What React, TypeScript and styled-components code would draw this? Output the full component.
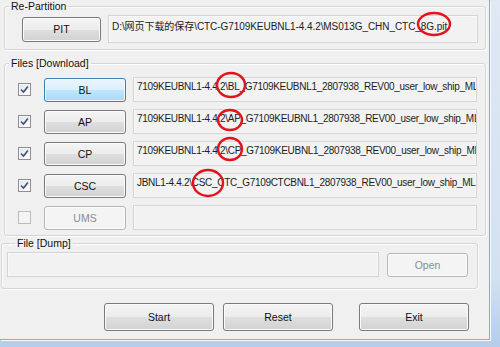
import React from "react";
import styled, { createGlobalStyle, css } from "styled-components";

const GlobalStyle = createGlobalStyle`
  html, body {
    margin: 0;
    padding: 0;
    background: #c9dbef;
  }
  body {
    font-family: "Liberation Sans", "Noto Sans CJK SC", sans-serif;
    font-size: 10.5px;
    color: #000;
  }
`;

const Frame = styled.div`
  position: relative;
  width: 500px;
  height: 347px;
  overflow: hidden;
  background: linear-gradient(180deg, #dfe8f3 0%, #d3e1f1 80%, #b4cdea 100%);
`;

const Client = styled.div`
  box-sizing: border-box;
  width: 490px;
  height: 340px;
  padding-left: 4px;
  background: #f0f0f0;
  border-right: 1px solid #9aa9ba;
  border-bottom: 1px solid #9aa9ba;
  box-shadow: 1px 1px 0 #f6f9fc;
  display: flex;
  flex-direction: column;
`;

const Group = styled.fieldset<{ $mt?: number; $ml?: number; $mr?: number }>`
  margin: ${(p) => p.$mt ?? 0}px ${(p) => p.$mr ?? 3}px 0 ${(p) => p.$ml ?? 0}px;
  padding: 0;
  border: 1px solid #d5d5d5;
  border-radius: 3px;
  box-shadow: inset 1px 1px 0 #fdfdfd, 1px 1px 0 #fdfdfd;
  min-width: 0;
`;

const Legend = styled.legend<{ $indent?: number }>`
  margin-left: ${(p) => p.$indent ?? 4}px;
  padding: 0 2px;
  line-height: 12px;
  font-size: 10.5px;
  color: #111;
`;

const Body = styled.div<{ $pad: string; $gap?: number }>`
  padding: ${(p) => p.$pad};
  display: flex;
  flex-direction: column;
  gap: ${(p) => p.$gap ?? 0}px;
`;

const Row = styled.div<{ $h: number; $gap?: number }>`
  height: ${(p) => p.$h}px;
  display: flex;
  align-items: center;
  gap: ${(p) => p.$gap ?? 7}px;
`;

const Field = styled.div<{ $h?: number; $pt?: number; $spacing?: number }>`
  flex: 1;
  min-width: 0;
  box-sizing: border-box;
  height: ${(p) => p.$h ?? 25}px;
  padding: ${(p) => p.$pt ?? 3}px 0 0 3px;
  border: 1px solid #d4d4d4;
  box-shadow: inset 0 0 0 1px #f8f8f8;
  background: #f2f2f2;
  font-size: 10px;
  line-height: 12px;
  letter-spacing: ${(p) => p.$spacing ?? 0}px;
  color: #1c1c1c;
  white-space: nowrap;
  overflow: hidden;
`;

const Button = styled.button<{ $w: number; $h?: number; $hot?: boolean; $ml?: number }>`
  flex: none;
  box-sizing: border-box;
  width: ${(p) => p.$w}px;
  height: ${(p) => p.$h ?? 24}px;
  margin: 0 0 0 ${(p) => p.$ml ?? 0}px;
  padding: 0;
  border: 1px solid #7a7a7a;
  border-radius: 3px;
  font-family: inherit;
  font-size: 10.5px;
  color: #111;
  background: linear-gradient(180deg, #f4f4f4 0%, #ececec 50%, #dfdfdf 51%, #d2d2d2 100%);
  box-shadow: inset 0 0 0 1px #fbfbfb;

  ${(p) =>
    p.$hot &&
    css`
      border-color: #3c7fb1;
      background: linear-gradient(180deg, #eaf6fd 0%, #d9f0fc 50%, #bee6fd 51%, #a7d9f5 100%);
      box-shadow: inset 0 0 0 1px #f3fbff;
    `}

  &:disabled {
    border-color: #b4b7ba;
    background: #f4f4f4;
    box-shadow: inset 0 0 0 1px #fbfbfb;
    color: #8c8c8c;
  }
`;

const Check = styled.span<{ $off?: boolean }>`
  flex: none;
  box-sizing: border-box;
  width: 13px;
  height: 13px;
  margin-right: 6px;
  border: 1px solid ${(p) => (p.$off ? "#bcbcbc" : "#8e8f8f")};
  background: ${(p) =>
    p.$off ? "#f4f4f4" : "linear-gradient(135deg, #dfe3e8 0%, #ffffff 100%)"};
  box-shadow: inset 0 0 0 1px ${(p) => (p.$off ? "#f4f4f4" : "#f6f8fa")};
  display: flex;
  align-items: center;
  justify-content: center;
`;

const ActionBar = styled.div`
  display: flex;
  justify-content: flex-end;
  gap: 9px;
  margin-top: 14px;
  padding-right: 20px;
`;

const Marks = styled.svg`
  position: absolute;
  left: 0;
  top: 0;
  pointer-events: none;
`;

const CheckBox = ({ on }: { on: boolean }) => (
  <Check $off={!on}>
    {on && (
      <svg width="9" height="9" viewBox="0 0 9 9">
        <path d="M1 4.5 L3.5 7 L8 1.5" fill="none" stroke="#3d4f84" strokeWidth="1.6" />
      </svg>
    )}
  </Check>
);

const files = [
  { key: "BL", on: true, hot: true, path: "7109KEUBNL1-4.4.2\\BL_G7109KEUBNL1_2807938_REV00_user_low_ship_ML" },
  { key: "AP", on: true, path: "7109KEUBNL1-4.4.2\\AP_G7109KEUBNL1_2807938_REV00_user_low_ship_ML" },
  { key: "CP", on: true, path: "7109KEUBNL1-4.4.2\\CP_G7109KEUBNL1_2807938_REV00_user_low_ship_ML" },
  { key: "CSC", on: true, path: "JBNL1-4.4.2\\CSC_CTC_G7109CTCBNL1_2807938_REV00_user_low_ship_ML" },
  { key: "UMS", on: false, path: "" },
];

const circles = [
  { cx: 434, cy: 24, rx: 16, ry: 11 },
  { cx: 231, cy: 85, rx: 14, ry: 12 },
  { cx: 230, cy: 120, rx: 12, ry: 10 },
  { cx: 230, cy: 149, rx: 12, ry: 11 },
  { cx: 208, cy: 183, rx: 15, ry: 13 },
];

export default function App() {
  return (
    <>
      <GlobalStyle />
      <Frame>
        <Client>
          <Group>
            <Legend>Re-Partition</Legend>
            <Body $pad="3px 7px 6px 17px">
              <Row $h={28}>
                <Button $w={79} $h={25}>PIT</Button>
                <Field $h={28} $pt={5} $spacing={-0.06}>
                  D:\网页下载的保存\CTC-G7109KEUBNL1-4.4.2\MS013G_CHN_CTC_8G.pit
                </Field>
              </Row>
            </Body>
          </Group>

          <Group $mt={7}>
            <Legend>Files [Download]</Legend>
            <Body $pad="8px 8px 5px 13px" $gap={7}>
              {files.map((f) => (
                <Row key={f.key} $h={25} $gap={7}>
                  <CheckBox on={f.on} />
                  <Button $w={82} $hot={f.hot} disabled={!f.on}>
                    {f.key}
                  </Button>
                  <Field $spacing={-0.3}>{f.path}</Field>
                </Row>
              ))}
            </Body>
          </Group>

          <Group $mt={1} $ml={-3} $mr={11}>
            <Legend $indent={13}>File [Dump]</Legend>
            <Body $pad="3px 9px 11px 5px">
              <Row $h={25} $gap={8}>
                <Field />
                <Button $w={81} disabled>Open</Button>
              </Row>
            </Body>
          </Group>

          <ActionBar>
            <Button $w={110} $h={28}>Start</Button>
            <Button $w={110} $h={28}>Reset</Button>
            <Button $w={110} $h={28} $ml={17}>Exit</Button>
          </ActionBar>
        </Client>

        <Marks width="500" height="347" viewBox="0 0 500 347">
          {circles.map((c, i) => (
            <ellipse
              key={i}
              cx={c.cx}
              cy={c.cy}
              rx={c.rx}
              ry={c.ry}
              fill="none"
              stroke="#e3121b"
              strokeWidth="2.4"
            />
          ))}
        </Marks>
      </Frame>
    </>
  );
}
